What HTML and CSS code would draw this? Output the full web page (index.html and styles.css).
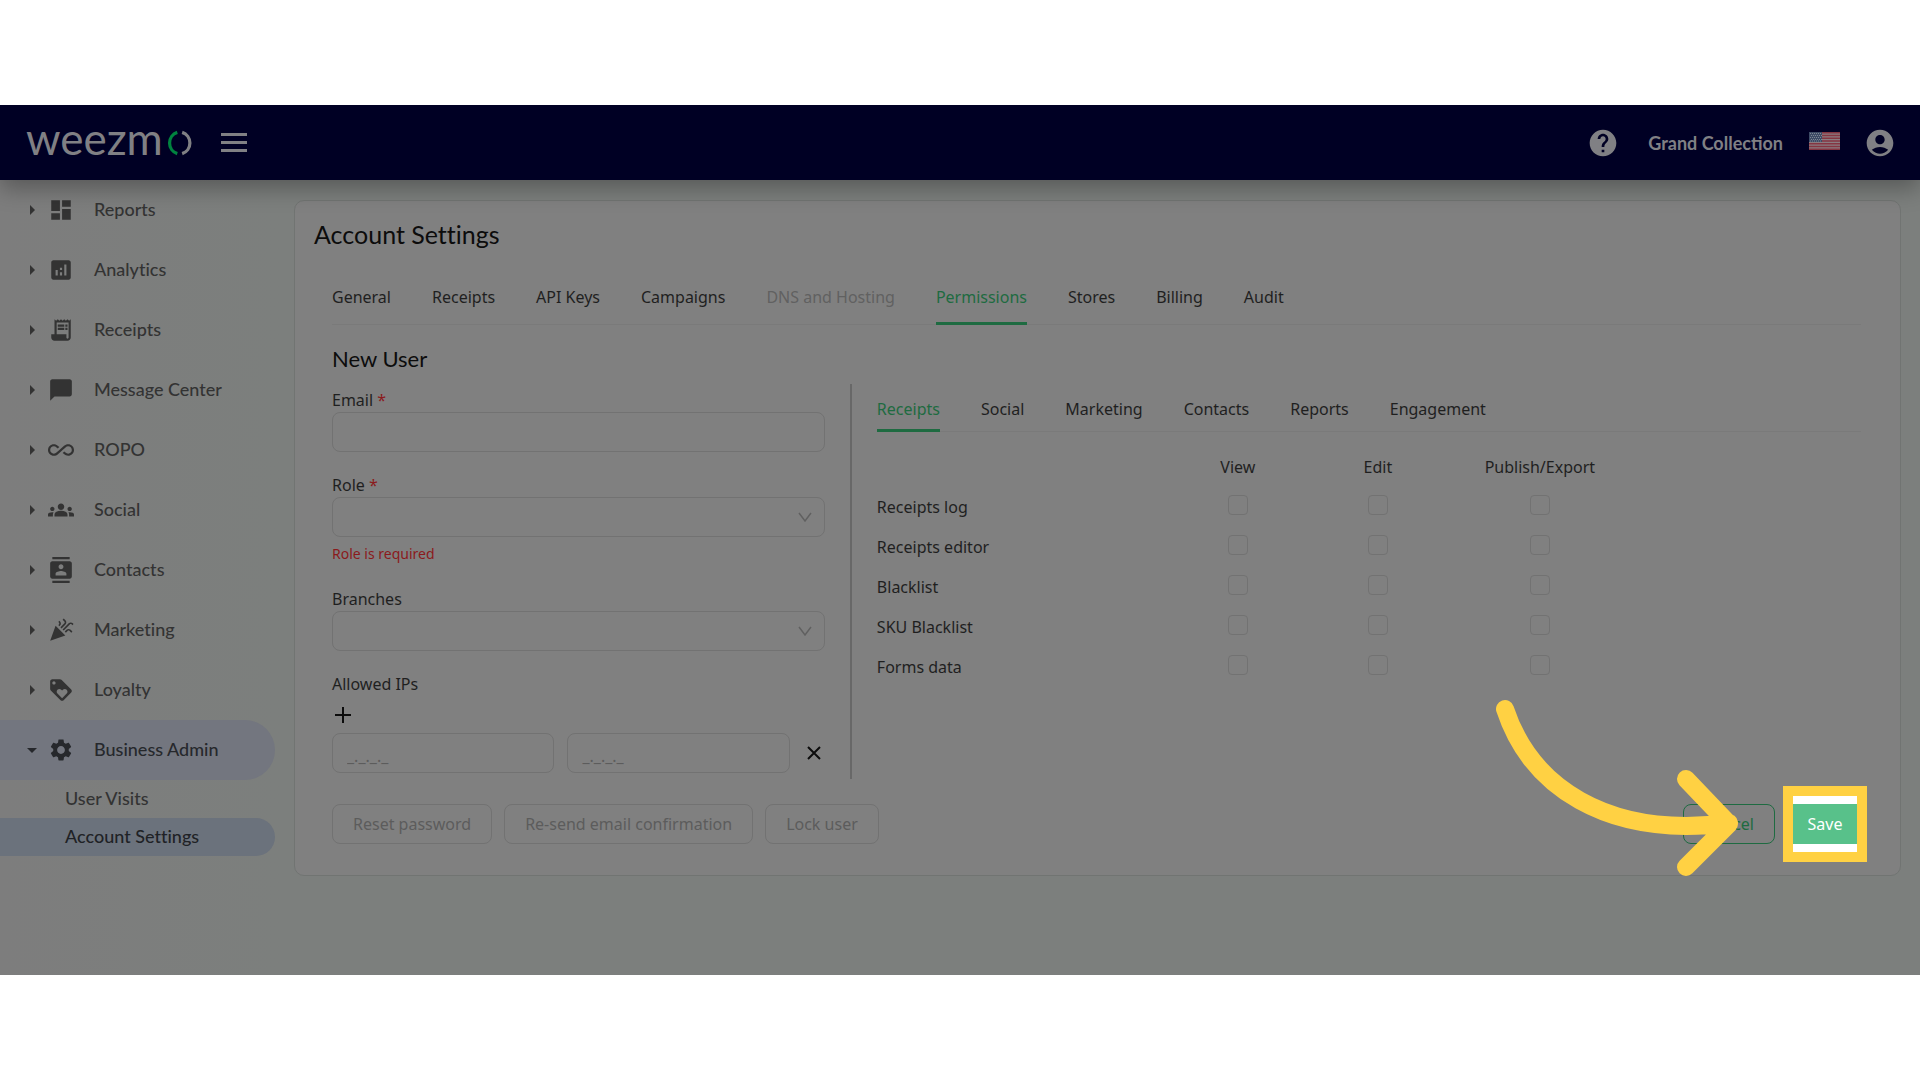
FILE: index.html
```html
<!DOCTYPE html>
<html lang="en">
<head>
<meta charset="utf-8">
<meta name="viewport" content="width=device-width, initial-scale=1">
<title>Account Settings - Weezmo</title>
<link rel="stylesheet" href="styles.css">
</head>
<body>
<div class="app">
  <header class="topbar">
    <a class="logo" href="#" aria-label="Weezmo home">
      <span class="logo-word">weezm</span>
      <svg class="logo-ring" viewBox="0 0 24 24" aria-hidden="true">
        <path class="ring-left" d="M9.5 2.2A10.3 10.3 0 0 0 9.5 21.8"/>
        <path class="ring-right" d="M14 2.2A10.3 10.3 0 0 1 14 21.8"/>
      </svg>
    </a>
    <button class="icon-button menu-button" type="button" aria-label="Toggle menu">
      <svg class="menu-icon" viewBox="0 0 26 20"><path d="M0 0h26v3H0zM0 8h26v3H0zM0 16h26v3H0z"/></svg>
    </button>
    <div class="topbar-right">
      <button class="icon-button" type="button" aria-label="Help">
        <svg class="round-icon" viewBox="0 0 24 24"><path d="M12 2C6.480 2 2 6.480 2 12s4.480 10 10 10 10-4.480 10-10S17.520 2 12 2zm1 17h-2v-2h2v2zm2.070-7.750l-.9.920C13.450 12.900 13 13.500 13 15h-2v-.5c0-1.100.450-2.100 1.170-2.830l1.240-1.260c.370-.360.590-.860.590-1.410 0-1.100-.9-2-2-2s-2 .9-2 2H8c0-2.210 1.790-4 4-4s4 1.790 4 4c0 .880-.360 1.680-.930 2.250z"/></svg>
      </button>
      <span class="company">Grand Collection</span>
      <button class="icon-button flag-button" type="button" aria-label="Language: English (US)">
        <svg class="flag" viewBox="0 0 31 18">
          <path fill="#8a7b80" d="M0 0h31v18H0z"/>
          <path stroke="#853542" stroke-width="1.4" d="M0 .7h31M0 3.500h31M0 6.300h31M0 9h31M0 11.800h31M0 14.500h31M0 17.300h31"/>
          <path fill="#3d4b66" d="M0 0h13v10H0z"/>
          <path stroke="#7d8794" stroke-width="1" stroke-dasharray="1 1" d="M1 1.500h11M2 3.500h11M1 5.500h11M2 7.500h11M1 9h11"/>
        </svg>
      </button>
      <button class="icon-button" type="button" aria-label="Profile">
        <svg class="round-icon" viewBox="0 0 24 24"><path d="M12 2C6.480 2 2 6.480 2 12s4.480 10 10 10 10-4.480 10-10S17.520 2 12 2zm0 4c1.930 0 3.500 1.570 3.500 3.500S13.930 13 12 13s-3.500-1.570-3.500-3.500S10.070 6 12 6zm0 14c-2.030 0-4.430-.820-6.140-2.880C7.550 15.800 9.680 15 12 15s4.450.8 6.140 2.120C16.430 19.180 14.030 20 12 20z"/></svg>
      </button>
    </div>
  </header>

  <div class="body">
    <nav class="sidebar" aria-label="Main">
      <a class="nav-item" href="#"><span class="caret"></span><svg class="nav-icon" viewBox="0 0 24 24"><path d="M3 13h8V3H3v10zm0 8h8v-6H3v6zm10 0h8V11h-8v10zm0-18v6h8V3h-8z"/></svg><span>Reports</span></a>
      <a class="nav-item" href="#"><span class="caret"></span><svg class="nav-icon" viewBox="0 0 24 24"><path d="M19 3H5c-1.100 0-2 .9-2 2v14c0 1.100.9 2 2 2h14c1.100 0 2-.9 2-2V5c0-1.100-.9-2-2-2zM9 17H7v-5h2v5zm4 0h-2v-3h2v3zm0-5h-2v-2h2v2zm4 5h-2V7h2v10z"/></svg><span>Analytics</span></a>
      <a class="nav-item" href="#"><span class="caret"></span><svg class="nav-icon" viewBox="0 0 24 24"><path d="M19.500 3.500 18 2l-1.500 1.500L15 2l-1.500 1.500L12 2l-1.500 1.500L9 2 7.500 3.500 6 2v14H3v3c0 1.660 1.340 3 3 3h12c1.660 0 3-1.340 3-3V2l-1.500 1.500zM19 19c0 .550-.450 1-1 1s-1-.450-1-1v-3H8V5h11v14z"/><path d="M9 7h6v2H9zM16 7h2v2h-2zM9 10h6v2H9zM16 10h2v2h-2z"/></svg><span>Receipts</span></a>
      <a class="nav-item" href="#"><span class="caret"></span><svg class="nav-icon" viewBox="0 0 24 24"><path d="M20 2H4c-1.100 0-2 .9-2 2v18l4-4h14c1.100 0 2-.9 2-2V4c0-1.100-.9-2-2-2z"/></svg><span>Message Center</span></a>
      <a class="nav-item" href="#"><span class="caret"></span><svg class="nav-icon" viewBox="0 0 24 24"><path d="M18.600 6.620c-1.440 0-2.800.560-3.770 1.530L12 10.660 10.480 12h.010L7.800 14.390c-.640.640-1.490.990-2.400.990-1.870 0-3.390-1.510-3.390-3.380S3.530 8.620 5.400 8.620c.910 0 1.760.350 2.440 1.030l1.130 1 1.510-1.340L9.220 8.200C8.200 7.180 6.840 6.620 5.400 6.620 2.420 6.620 0 9.040 0 12s2.420 5.380 5.400 5.380c1.440 0 2.800-.560 3.770-1.530l2.830-2.500.010.010L13.520 12h-.010l2.690-2.390c.640-.640 1.490-.990 2.400-.990 1.870 0 3.390 1.510 3.390 3.380s-1.520 3.380-3.390 3.380c-.9 0-1.760-.350-2.440-1.030l-1.140-1.010-1.510 1.340 1.270 1.120c1.020 1.010 2.370 1.570 3.820 1.570 2.980 0 5.400-2.410 5.400-5.380s-2.420-5.370-5.400-5.370z"/></svg><span>ROPO</span></a>
      <a class="nav-item" href="#"><span class="caret"></span><svg class="nav-icon" viewBox="0 0 24 24"><path d="M12 12.750c1.630 0 3.070.390 4.240.9 1.080.480 1.760 1.560 1.760 2.730V18H6v-1.610c0-1.180.680-2.260 1.760-2.730 1.170-.520 2.610-.910 4.240-.910zM4 13c1.100 0 2-.9 2-2s-.9-2-2-2-2 .9-2 2 .9 2 2 2zm1.130 1.100c-.370-.060-.740-.1-1.130-.1-.990 0-1.930.210-2.780.580C.480 14.900 0 15.620 0 16.430V18h4.500v-1.610c0-.830.230-1.610.630-2.290zM20 13c1.100 0 2-.9 2-2s-.9-2-2-2-2 .9-2 2 .9 2 2 2zm4 3.430c0-.810-.480-1.530-1.220-1.850-.850-.370-1.790-.580-2.780-.580-.390 0-.760.040-1.130.1.4.680.630 1.460.630 2.290V18H24v-1.570zM12 6c1.660 0 3 1.340 3 3s-1.340 3-3 3-3-1.340-3-3 1.340-3 3-3z"/></svg><span>Social</span></a>
      <a class="nav-item" href="#"><span class="caret"></span><svg class="nav-icon" viewBox="0 0 24 24"><path d="M20 0H4v2h16V0zM4 24h16v-2H4v2zM20 4H4c-1.100 0-2 .9-2 2v12c0 1.100.9 2 2 2h16c1.100 0 2-.9 2-2V6c0-1.100-.9-2-2-2zm-8 2.750c1.240 0 2.250 1.010 2.250 2.250s-1.010 2.250-2.250 2.250S9.750 10.240 9.750 9 10.760 6.750 12 6.750zM17 17H7v-1.500c0-1.670 3.330-2.500 5-2.500s5 .830 5 2.500V17z"/></svg><span>Contacts</span></a>
      <a class="nav-item" href="#"><span class="caret"></span><svg class="nav-icon" viewBox="0 0 24 24"><path d="M2 22l14-5-9-9zM14.530 12.530l5.590-5.590c.490-.490 1.280-.490 1.770 0l.590.590 1.060-1.060-.590-.590c-1.070-1.070-2.820-1.070-3.890 0l-5.590 5.590 1.060 1.060zM10.060 6.880l-.590.590 1.060 1.060.590-.590c1.070-1.070 1.070-2.820 0-3.890l-.590-.590-1.060 1.070.590.590c.480.480.480 1.280 0 1.760zM17.060 11.880l-1.590 1.590 1.060 1.060 1.590-1.590c.490-.490 1.280-.490 1.770 0l1.610 1.610 1.060-1.060-1.610-1.610c-1.080-1.070-2.820-1.070-3.890 0zM15.060 5.880l-3.590 3.590 1.060 1.060 3.590-3.590c1.070-1.070 1.070-2.820 0-3.890l-1.590-1.590-1.060 1.060 1.590 1.590c.480.490.480 1.290 0 1.770z"/></svg><span>Marketing</span></a>
      <a class="nav-item" href="#"><span class="caret"></span><svg class="nav-icon" viewBox="0 0 24 24"><path d="M21.410 11.580l-9-9C12.050 2.220 11.550 2 11 2H4c-1.100 0-2 .9-2 2v7c0 .550.220 1.050.590 1.420l9 9c.360.360.860.580 1.410.580.550 0 1.050-.220 1.410-.590l7-7c.370-.360.590-.860.590-1.410 0-.550-.230-1.060-.590-1.420zM5.500 7C4.670 7 4 6.330 4 5.500S4.670 4 5.500 4 7 4.670 7 5.500 6.330 7 5.500 7zm11.770 8.270L13 19.540l-4.270-4.270C8.280 14.810 8 14.190 8 13.500c0-1.380 1.120-2.500 2.500-2.500.690 0 1.320.280 1.770.740l.730.720.730-.730c.450-.450 1.080-.730 1.770-.730 1.380 0 2.500 1.120 2.500 2.500 0 .690-.280 1.320-.730 1.770z"/></svg><span>Loyalty</span></a>
      <a class="nav-item is-open" href="#" aria-expanded="true"><span class="caret"></span><svg class="nav-icon" viewBox="0 0 24 24"><path d="M19.140 12.940c.040-.3.060-.610.060-.940 0-.320-.020-.640-.070-.940l2.030-1.580c.180-.140.230-.410.120-.610l-1.920-3.320c-.120-.220-.370-.290-.590-.220l-2.390.960c-.5-.380-1.030-.7-1.620-.940l-.360-2.540c-.040-.240-.240-.410-.480-.410h-3.840c-.240 0-.430.170-.470.410l-.360 2.540c-.590.240-1.130.570-1.620.940l-2.390-.960c-.220-.080-.470 0-.590.220L2.740 8.870c-.120.210-.080.470.120.610l2.030 1.580c-.050.3-.090.630-.090.940s.020.640.070.940l-2.030 1.580c-.180.140-.230.410-.120.610l1.920 3.320c.120.220.370.290.590.220l2.390-.960c.5.380 1.030.7 1.620.940l.360 2.540c.050.240.240.410.480.410h3.840c.240 0 .440-.170.470-.410l.360-2.540c.590-.240 1.130-.560 1.620-.940l2.390.960c.220.080.470 0 .590-.220l1.920-3.320c.120-.220.070-.470-.120-.610l-2.010-1.580zM12 15.600c-1.980 0-3.600-1.620-3.600-3.600s1.620-3.600 3.600-3.600 3.600 1.620 3.600 3.600-1.620 3.600-3.600 3.600z"/></svg><span>Business Admin</span></a>
      <a class="sub-item" href="#">User Visits</a>
      <a class="sub-item is-current" href="#" aria-current="page">Account Settings</a>
    </nav>

    <main class="content">
      <section class="card">
        <h1 class="page-title">Account Settings</h1>
        <div class="card-inner">
          <div class="tabs" role="tablist" aria-label="Account settings">
            <button class="tab" type="button" role="tab">General</button>
            <button class="tab" type="button" role="tab">Receipts</button>
            <button class="tab" type="button" role="tab">API Keys</button>
            <button class="tab" type="button" role="tab">Campaigns</button>
            <button class="tab" type="button" role="tab" disabled>DNS and Hosting</button>
            <button class="tab is-active" type="button" role="tab" aria-selected="true">Permissions</button>
            <button class="tab" type="button" role="tab">Stores</button>
            <button class="tab" type="button" role="tab">Billing</button>
            <button class="tab" type="button" role="tab">Audit</button>
          </div>

          <h2 class="form-title">New User</h2>
          <form>
            <div class="panes">
              <div class="user-pane">
                <div class="field">
                  <label for="email">Email <span class="required">*</span></label>
                  <input class="control" id="email" type="email">
                </div>
                <div class="field">
                  <label for="role">Role <span class="required">*</span></label>
                  <div class="select-wrap">
                    <select class="control" id="role" aria-describedby="role-error"><option></option></select>
                    <svg class="chevron" viewBox="0 0 14 10"><path d="M1 1l6 8 6-8"/></svg>
                  </div>
                  <p class="error" id="role-error">Role is required</p>
                </div>
                <div class="field">
                  <label for="branches">Branches</label>
                  <div class="select-wrap">
                    <select class="control" id="branches"><option></option></select>
                    <svg class="chevron" viewBox="0 0 14 10"><path d="M1 1l6 8 6-8"/></svg>
                  </div>
                </div>
                <div class="field">
                  <label for="ip-from">Allowed IPs</label>
                  <button class="icon-button add-button" type="button" aria-label="Add IP range">
                    <svg class="glyph" viewBox="0 0 16 16"><path d="M8 0v16M0 8h16"/></svg>
                  </button>
                  <div class="ip-row">
                    <input class="control" id="ip-from" type="text" placeholder="_._._._" aria-label="IP from">
                    <input class="control" type="text" placeholder="_._._._" aria-label="IP to">
                    <button class="icon-button remove-button" type="button" aria-label="Remove IP range">
                      <svg class="glyph" viewBox="0 0 16 16"><path d="M2 2l12 12M14 2L2 14"/></svg>
                    </button>
                  </div>
                </div>
              </div>

              <div class="access-pane">
                <div class="tabs tabs-compact" role="tablist" aria-label="Permission groups">
                  <button class="tab is-active" type="button" role="tab" aria-selected="true">Receipts</button>
                  <button class="tab" type="button" role="tab">Social</button>
                  <button class="tab" type="button" role="tab">Marketing</button>
                  <button class="tab" type="button" role="tab">Contacts</button>
                  <button class="tab" type="button" role="tab">Reports</button>
                  <button class="tab" type="button" role="tab">Engagement</button>
                </div>
                <table class="access">
                  <colgroup><col class="col-name"><col class="col-view"><col class="col-edit"><col class="col-publish"></colgroup>
                  <thead>
                    <tr><td></td><th scope="col">View</th><th scope="col">Edit</th><th scope="col">Publish/Export</th></tr>
                  </thead>
                  <tbody>
                    <tr><th scope="row">Receipts log</th><td><input type="checkbox" aria-label="Receipts log: view"></td><td><input type="checkbox" aria-label="Receipts log: edit"></td><td><input type="checkbox" aria-label="Receipts log: publish/export"></td></tr>
                    <tr><th scope="row">Receipts editor</th><td><input type="checkbox" aria-label="Receipts editor: view"></td><td><input type="checkbox" aria-label="Receipts editor: edit"></td><td><input type="checkbox" aria-label="Receipts editor: publish/export"></td></tr>
                    <tr><th scope="row">Blacklist</th><td><input type="checkbox" aria-label="Blacklist: view"></td><td><input type="checkbox" aria-label="Blacklist: edit"></td><td><input type="checkbox" aria-label="Blacklist: publish/export"></td></tr>
                    <tr><th scope="row">SKU Blacklist</th><td><input type="checkbox" aria-label="SKU Blacklist: view"></td><td><input type="checkbox" aria-label="SKU Blacklist: edit"></td><td><input type="checkbox" aria-label="SKU Blacklist: publish/export"></td></tr>
                    <tr><th scope="row">Forms data</th><td><input type="checkbox" aria-label="Forms data: view"></td><td><input type="checkbox" aria-label="Forms data: edit"></td><td><input type="checkbox" aria-label="Forms data: publish/export"></td></tr>
                  </tbody>
                </table>
              </div>
            </div>

            <div class="actions">
              <button class="button" type="button" disabled>Reset password</button>
              <button class="button" type="button" disabled>Re-send email confirmation</button>
              <button class="button" type="button" disabled>Lock user</button>
              <div class="actions-end">
                <button class="button button-outline" type="button">Cancel</button>
                <div class="spotlight">
                  <button class="button-save" type="submit">Save</button>
                </div>
                <svg class="pointer" viewBox="1490 695 260 190" aria-hidden="true">
                  <path d="M1505 709C1530 785 1605 839 1729 823M1686 779L1729 824L1686 867"/>
                </svg>
              </div>
            </div>
          </form>
        </div>
      </section>
    </main>
  </div>
</div>
</body>
</html>
```
FILE: styles.css
```css
*, *::before, *::after { box-sizing: border-box; }

:root {
  --ui: "Noto Sans", "Open Sans", sans-serif;
  --brand: Lato, "Open Sans", sans-serif;
  --text: #1f1f1f;
  --line: #727272;
  --green: #1e6b41;
  --accent: #ffd143;
}

body {
  margin: 0;
  padding: 105px 0;
  background: #fff;
  color: var(--text);
  font: 16px/24px var(--ui);
}

button, input, select { font: inherit; color: inherit; }
a { color: inherit; text-decoration: none; }
svg { display: block; }

.app {
  display: flex;
  flex-direction: column;
  min-height: calc(100vh - 210px);
  overflow: hidden;
  background: linear-gradient(90deg, #7d7d7d 0, #7c7f7d 280px);
}

/* Top bar */
.topbar {
  position: relative;
  display: flex;
  align-items: center;
  height: 75px;
  padding: 0 24px 0 26px;
  background: #000024;
  color: #808084;
  box-shadow: 0 8px 22px rgba(0, 0, 0, .3);
}
.logo { display: flex; flex: none; align-items: center; gap: 4px; font-family: var(--brand); }
.logo-word { font-size: 44px; line-height: 60px; padding-bottom: 10px; }
.logo-ring { flex: none; width: 26px; height: 26px; fill: none; stroke-width: 3; }
.ring-left { stroke: #00833f; }
.ring-right { stroke: #808084; }
.icon-button {
  display: flex;
  align-items: center;
  justify-content: center;
  padding: 0;
  border: 0;
  background: none;
  cursor: pointer;
}
.menu-button { margin-left: 28px; }
.menu-icon { width: 26px; height: 20px; fill: currentColor; }
.topbar-right {
  display: flex;
  align-items: center;
  margin-left: auto;
}
.round-icon { width: 32px; height: 32px; fill: currentColor; }
.company { margin: 0 26px 0 29px; font: 700 18px/24px var(--brand); }
.flag-button { margin: 0 24px 4px 0; }
.flag { width: 31px; height: 18px; }

/* Sidebar */
.body { display: flex; flex: 1; }
.sidebar {
  flex: 0 0 294px;
  padding-right: 19px;
  color: #333;
  font: 500 18px/24px var(--brand);
}
.nav-item {
  display: grid;
  grid-template-columns: 16px 26px 1fr;
  align-items: center;
  height: 60px;
  padding-left: 24px;
  column-gap: 8px;
  border-radius: 0 30px 30px 0;
}
.nav-item span:last-child { margin-left: 12px; padding-bottom: 2px; }
.nav-icon { width: 26px; height: 26px; fill: currentColor; }
.caret {
  justify-self: center;
  border: 5px solid transparent;
  border-left-color: currentColor;
  border-right-width: 0;
}
.is-open { background: #73767f; color: #26282c; }
.is-open .caret { border: 5px solid transparent; border-top-color: currentColor; border-bottom-width: 0; }
.sub-item {
  display: block;
  padding: 6px 0 8px 65px;
  border-radius: 0 20px 20px 0;
}
.is-current { background: #6b727c; color: #1f2226; }

/* Card */
.content { flex: 1; min-width: 0; padding: 20px 19px 20px 0; }
.card {
  padding: 17px 19px 31px;
  border: 1px solid #717472;
  border-radius: 10px;
  background: #808080;
}
.page-title { margin: 0 0 22px; color: #0c0c0c; font: 400 25px/32px var(--brand); }
.card-inner { padding: 0 20px 0 18px; }
.form-title { margin: 20px 0 11px; color: #0c0c0c; font: 400 22px/28px var(--brand); }
.page-title, .sidebar { font-variant-ligatures: none; }

.tabs { display: flex; gap: 41px; border-bottom: 1px solid #7a7a7a; }
.tab {
  margin-bottom: -1px;
  padding: 13px 0;
  border: 0;
  border-bottom: 3px solid transparent;
  background: none;
  white-space: nowrap;
  cursor: pointer;
}
.tab:disabled { color: #616161; }
.tab.is-active { border-bottom-color: var(--green); color: var(--green); }
.tabs-compact .tab { padding: 13px 0 8px; }

.panes { display: grid; grid-template-columns: 34% 1fr; }
.user-pane {
  display: flex;
  flex-direction: column;
  gap: 21px;
  padding: 4px 25px 6px 0;
  border-right: 2px solid #686868;
}
.access-pane { min-width: 0; padding-left: 25px; }

.field label { display: block; }
.required { color: #8b1a1c; }
.control {
  display: block;
  width: 100%;
  min-width: 0;
  height: 40px;
  padding: 0 14px;
  border: 1px solid var(--line);
  border-radius: 8px;
  background: transparent;
  appearance: none;
}
.control::placeholder { color: #5c5c5c; opacity: 1; }
.select-wrap { display: grid; align-items: center; }
.select-wrap > * { grid-area: 1 / 1; }
.chevron {
  justify-self: end;
  width: 14px;
  height: 10px;
  margin-right: 13px;
  fill: none;
  stroke: #606060;
  stroke-width: 1.5;
  pointer-events: none;
}
.error { margin: 5px 0 0; color: #8b1a1c; font-size: 14px; line-height: 24px; }
.add-button { width: 22px; height: 37px; }
.glyph { width: 16px; height: 16px; fill: none; stroke: #0c0c0c; stroke-width: 2; }
.ip-row { display: grid; grid-template-columns: 1fr 1fr 22px; gap: 13px; }
.ip-row .control { padding-top: 6px; }

/* Permission matrix */
.access { margin-top: 15px; border-collapse: collapse; table-layout: fixed; }
.access th, .access td { height: 40px; padding: 0; font-weight: 400; text-align: center; }
.access tbody th { text-align: left; }
.col-name { width: 297px; }
.col-view { width: 128px; }
.col-edit { width: 152px; }
.col-publish { width: 172px; }
.access input {
  display: block;
  width: 20px;
  height: 20px;
  margin: 0 auto 4px;
  border: 1px solid var(--line);
  border-radius: 4px;
  appearance: none;
}

/* Form actions */
.actions { display: flex; gap: 12px; margin-top: 25px; }
.button {
  height: 40px;
  padding: 0 20px;
  border: 1px solid var(--line);
  border-radius: 8px;
  background: transparent;
  white-space: nowrap;
}
.button:disabled { color: #5c5c5c; }
.button-outline { border-color: var(--green); color: var(--green); }
.actions-end {
  position: relative;
  display: flex;
  align-items: center;
  gap: 8px;
  margin: -18px -6px -18px auto;
}
.spotlight { padding: 8px 0; border: 10px solid var(--accent); background: #fff; }
.button-save {
  display: block;
  width: 64px;
  height: 40px;
  padding: 0;
  border: 0;
  background: #58c18a;
  color: #fff;
}
.pointer {
  position: absolute;
  right: 117px;
  bottom: -23px;
  width: 260px;
  height: 190px;
  fill: none;
  stroke: var(--accent);
  stroke-width: 18;
  stroke-linecap: round;
  stroke-linejoin: round;
  pointer-events: none;
}
```
